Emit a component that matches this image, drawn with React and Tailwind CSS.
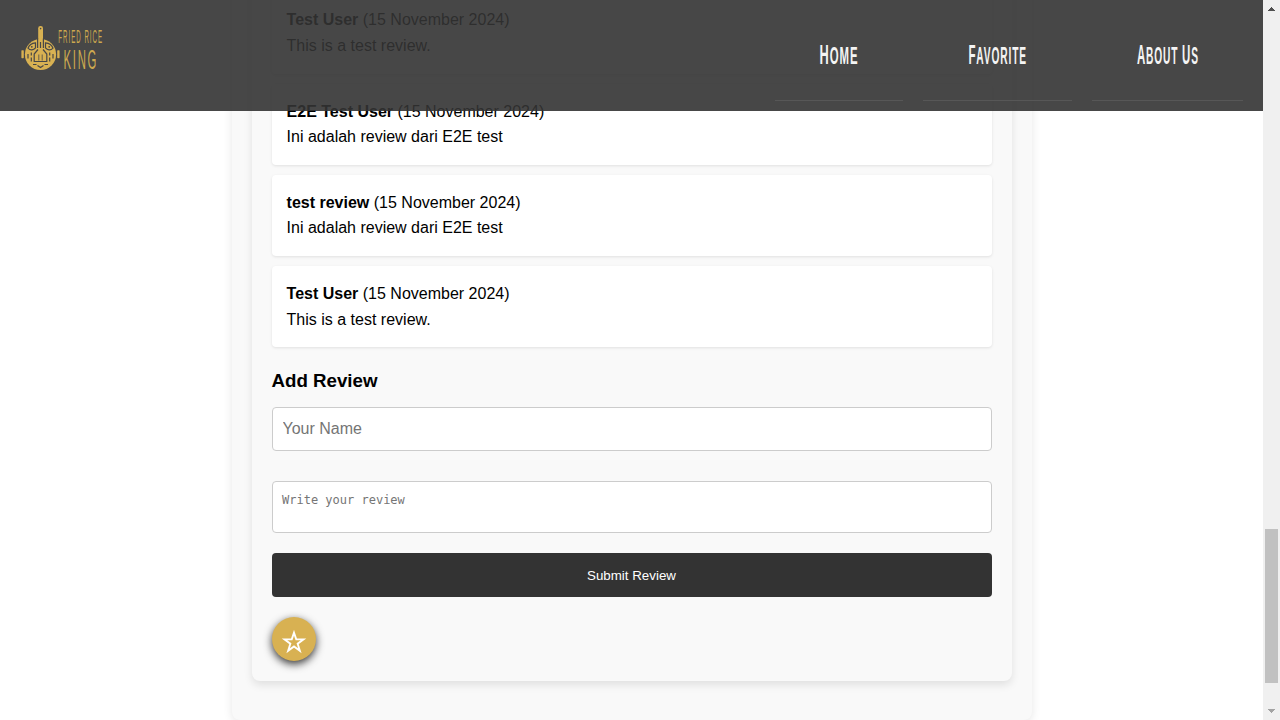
const reviews = [
  { name: "Test User", date: "(15 November 2024)", text: "This is a test review." },
  { name: "E2E Test User", date: "(15 November 2024)", text: "Ini adalah review dari E2E test" },
  { name: "test review", date: "(15 November 2024)", text: "Ini adalah review dari E2E test" },
  { name: "Test User", date: "(15 November 2024)", text: "This is a test review." },
];

const links = [
  { words: ["Home"], box: "w-32", scale: "scale-x-[0.475]" },
  { words: ["Favorite"], box: "w-[149px]", scale: "scale-x-[0.425]" },
  { words: ["About", "Us"], box: "w-[151px]", scale: "scale-x-[0.425]" },
];

function Logo() {
  return (
    <div className="flex h-[60px] w-[110px] text-[#cda94f]">
      <svg className="block shrink-0" width="41" height="60" viewBox="0 0 41 60" role="img" aria-label="Wok">
        <g fill="#d8b152">
          <rect x="18.2" y="6" width="4.8" height="16" rx="2.2" />
          <circle cx="20.5" cy="34.5" r="15.6" />
          <rect x="1.4" y="30.2" width="2.4" height="8" rx="0.6" />
          <rect x="37.2" y="30.2" width="2.4" height="8" rx="0.6" />
        </g>
        <g fill="none" stroke="#474747" strokeWidth="1.200">
          <path d="M17.600 18.500v9.500M23.400 18.500v9.500M20.500 22v6" />
          <path d="M15.500 22.800c-3.500.2-6.500 2.200-7.500 5.400 2.500 2.600 5.500 2 7.500-.4zM25.500 22.800c3.500.2 6.500 2.200 7.500 5.400-2.500 2.600-5.500 2-7.500-.4z" />
          <path d="M18 29.500l-3.800 4.500v7.500h12.600V34L23 29.500" />
          <path d="M18.800 34.500v6M22.200 34.500v6" strokeWidth="0.800" />
          <path d="M8 34v4.500M11.300 32.500v3M11.300 37.500v4M33 34v4.500M29.700 32.500v3M29.700 37.500v4" />
          <path d="M13 44.500h3.500M24.500 44.500H28M17.500 45.500l3 2 3-2" />
        </g>
        <g fill="#474747">
          <circle cx="20.6" cy="8.600" r="0.800" />
          <circle cx="11.800" cy="26.800" r="0.900" />
          <circle cx="29.200" cy="26.800" r="0.900" />
        </g>
      </svg>
      <div className="flex w-[69px] flex-col items-center pt-1.5 pr-[31px]">
        <span className="block h-[20px] scale-x-[0.340] pl-1 text-[18px] leading-[22px] tracking-[3px] whitespace-nowrap">FRIED RICE</span>
        <span className="block h-7 scale-x-[0.420] pl-1 text-[27px] leading-7 tracking-[4px] whitespace-nowrap">KING</span>
      </div>
    </div>
  );
}

function Header() {
  return (
    <header className="absolute inset-x-0 top-0 flex h-[111px] justify-between bg-[rgba(51,51,51,0.9)] pr-5 pl-5">
      <div className="pt-5">
        <Logo />
      </div>
      <nav className="flex gap-5 pb-2.5">
        {links.map(({ words, box, scale }) => (
          <a key={words[0]} className={`flex ${box} justify-center border-b border-[#575757] pt-[39px] text-[#f4f4f4]`}>
            <span className={`block h-8 whitespace-nowrap text-[24px] leading-8 font-bold tracking-[2px] uppercase ${scale}`}>
              {words.map((word, i) => (
                <span key={word}>
                  {i > 0 && " "}
                  <span className="text-[27px]">{word[0]}</span>
                  {word.slice(1)}
                </span>
              ))}
            </span>
          </a>
        ))}
      </nav>
    </header>
  );
}

function Scrollbar() {
  return (
    <aside className="flex h-full w-[17px] flex-col items-center bg-[#f0f0f0]">
      <svg width="17" height="17" viewBox="0 0 17 17" shapeRendering="crispEdges">
        <path d="M5 11h7L8.500 7z" fill="#505050" />
      </svg>
      <div className="mt-[512px] h-[154px] w-[13px] bg-[#c1c1c1]" />
      <svg className="mt-auto" width="17" height="17" viewBox="0 0 17 17" shapeRendering="crispEdges">
        <path d="M5 6h7L8.500 10z" fill="#a3a3a3" />
      </svg>
    </aside>
  );
}

export default function App() {
  return (
    <div className="flex h-[720px] w-[1280px] overflow-hidden bg-white font-['Liberation_Sans',Arial,sans-serif] text-base text-black">
      <div className="relative h-full w-[1263px] overflow-hidden">
        <main className="-mt-[27.650px] ml-[232px] w-[800px] rounded-lg bg-[#f9f9f9] px-5 pb-[39px] shadow-[0_2px_10px_rgba(0,0,0,0.1)]">
          <section className="rounded-lg bg-[#f9f9f9] p-5 shadow-[0_4px_8px_rgba(0,0,0,0.1)]">
            <ul className="space-y-2.5">
              {reviews.map((r, i) => (
                <li key={i} className="h-[81.2px] rounded bg-white py-[15px] pr-[15px] pl-[14.600px] leading-[25.6px] shadow-[0_1px_3px_rgba(0,0,0,0.1)]">
                  <p><strong>{r.name}</strong> {r.date}</p>
                  <p>{r.text}</p>
                </li>
              ))}
            </ul>
            <h3 className="mt-[19px] -ml-[0.500px] text-[18.720px] leading-[30px] font-bold">Add Review</h3>
            <form className="mt-[10.850px] flex flex-col">
              <input
                className="h-11 rounded border border-[#ccc] bg-white px-[9.500px] text-base placeholder:text-[#757575]"
                placeholder="Your Name"
              />
              <textarea
                className="mt-[30px] h-[52px] resize-none rounded border border-[#ccc] bg-white px-[9px] py-2.5 font-['DejaVu_Sans_Mono',monospace] text-[12px] leading-4 placeholder:text-[#757575]"
                placeholder="Write your review"
              />
              <button type="button" className="mt-5 h-11 rounded bg-[#333] pt-[3px] pr-px text-[13.333px] text-white">
                Submit Review
              </button>
            </form>
            <button
              aria-label="Favorite"
              className="mt-5 flex size-11 items-center justify-center rounded-full bg-[#d8b152] pt-1.5 shadow-[0_3px_8px_rgba(0,0,0,0.8)]"
            >
              <svg width="26" height="26" viewBox="0 0 26 26" fill="none" stroke="white" strokeWidth="1.900">
                <path d="M13 3.800l2.250 6.600h7.200l-5.800 4.300 2.200 7.100-5.850-4.300-5.850 4.300 2.200-7.100-5.800-4.300h7.200z" />
              </svg>
            </button>
          </section>
        </main>
        <Header />
      </div>
      <Scrollbar />
    </div>
  );
}
